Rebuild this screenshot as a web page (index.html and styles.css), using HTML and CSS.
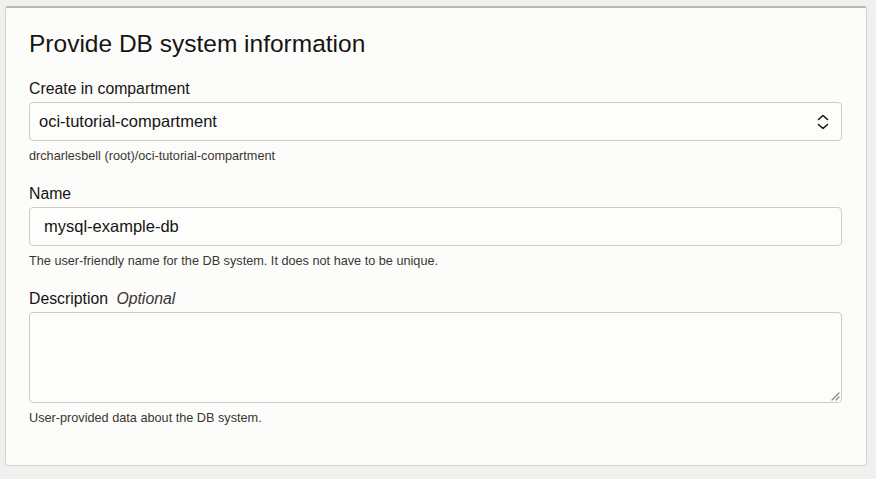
FILE: index.html
```html
<!DOCTYPE html>
<html lang="en">
<head>
  <meta charset="UTF-8" />
  <title>Provide DB system information</title>
  <link rel="stylesheet" href="styles.css">
</head>
<body>
  <div class="panel">
    <h2>Provide DB system information</h2>

    <div class="field">
      <label class="label">Create in compartment</label>
      <div class="select">
        <span>oci-tutorial-compartment</span>
        <svg class="chevrons" width="14" height="18" viewBox="0 0 14 18">
          <path d="M2.5 6.5 L7 2.5 L11.5 6.5" fill="none" stroke="#161513" stroke-width="1.6" stroke-linecap="round" stroke-linejoin="round"/>
          <path d="M2.5 11.5 L7 15.5 L11.5 11.5" fill="none" stroke="#161513" stroke-width="1.6" stroke-linecap="round" stroke-linejoin="round"/>
        </svg>
      </div>
      <p class="help">drcharlesbell (root)/oci-tutorial-compartment</p>
    </div>

    <div class="field">
      <label class="label">Name</label>
      <div class="input">mysql-example-db</div>
      <p class="help">The user-friendly name for the DB system. It does not have to be unique.</p>
    </div>

    <div class="field">
      <label class="label">Description <em>Optional</em></label>
      <div class="textarea">
        <svg class="grip" width="10" height="10" viewBox="0 0 10 10">
          <path d="M9 2 L2 9 M9 6 L6 9" stroke="#8a8581" stroke-width="1.2" stroke-linecap="round"/>
        </svg>
      </div>
      <p class="help">User-provided data about the DB system.</p>
    </div>
  </div>
</body>
</html>
```

FILE: styles.css
```css
body {
  margin: 0;
  background-color: #f1f0ee;
  font-family: "Liberation Sans", Arial, sans-serif;
  color: #161513;
}
.panel {
  box-sizing: border-box;
  width: 862px;
  height: 460px;
  margin: 6px 0 0 5px;
  padding: 23px 24px 0 23px;
  background-color: #fcfcfb;
  border: 1px solid #d4d1ce;
  border-top: 2px solid #bcb7b2;
  border-radius: 3px;
}
h2 {
  margin: 0 0 23px;
  font-size: 24.5px;
  font-weight: normal;
  line-height: 26px;
}
.field {
  margin-bottom: 21px;
}
.label {
  display: block;
  font-size: 15.8px;
  line-height: 18px;
  margin-bottom: 4px;
}
.label em {
  margin-left: 4px;
  color: #3a3632;
}
.select,
.input {
  box-sizing: border-box;
  height: 39px;
  display: flex;
  align-items: center;
  border: 1px solid #cfcbc7;
  border-radius: 4px;
  background-color: #fdfdfc;
  font-size: 16.5px;
}
.select {
  justify-content: space-between;
  padding: 0 11px 0 9px;
}
.input {
  padding-left: 14px;
}
.chevrons {
  display: block;
}
.textarea {
  box-sizing: border-box;
  position: relative;
  height: 91px;
  border: 1px solid #cfcbc7;
  border-radius: 4px;
  background-color: #fdfdfc;
}
.grip {
  position: absolute;
  right: 1px;
  bottom: 1px;
}
.help {
  margin: 8px 0 0;
  font-size: 12.7px;
  line-height: 15px;
  color: #3a3632;
}
```
